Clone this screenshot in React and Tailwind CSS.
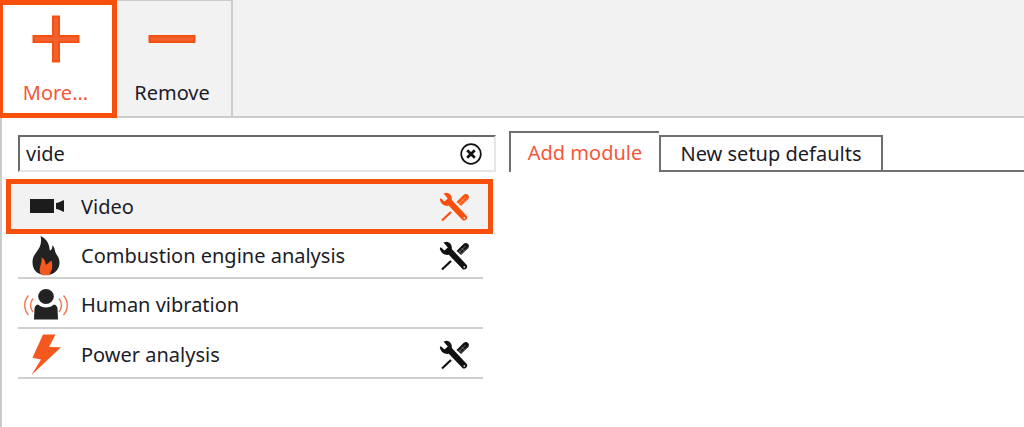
import { useState } from "react";

function PlusIcon() {
  return (
    <svg viewBox="0 0 48 48" className="h-12 w-12" aria-hidden="true">
      <path d="M20 0.5h8v19.5h19.5v8H28v19.5h-8V28H.5v-8H20z" fill="#f4500f" />
      <path d="M22 3h4v19h19v4H26v19h-4V26H3v-4h19z" fill="#f26030" />
    </svg>
  );
}

function MinusIcon() {
  return (
    <svg viewBox="0 0 48 48" className="h-12 w-12" aria-hidden="true">
      <path d="M.5 20h47v8H.5z" fill="#f4500f" />
      <path d="M3 22h42v4H3z" fill="#f26030" />
    </svg>
  );
}

function ClearIcon() {
  return (
    <svg viewBox="0 0 22 22" className="h-[22px] w-[22px]" fill="none" stroke="#111" aria-hidden="true">
      <circle cx="11" cy="11" r="9.8" strokeWidth="1.7" />
      <path d="M7.2 7.2l7.6 7.6M14.8 7.2l-7.6 7.6" strokeWidth="2.7" />
    </svg>
  );
}

function CameraIcon() {
  return (
    <svg viewBox="0 0 46 44" className="h-11 w-[46px]" aria-hidden="true">
      <path d="M7 14h24v14H7zM33 18l2.500-.6 5.500-2.400v12l-5.500-2.400-2.500-.6z" fill="#1c1c1c" />
    </svg>
  );
}

function FlameIcon() {
  return (
    <svg viewBox="0 0 46 44" className="h-11 w-[46px]" aria-hidden="true">
      <path
        d="M17.500 2c5 2.200 8.800 6.500 9.300 14.500 2.200-1 2.800-3 2.300-5.300 2.400 1.600 2.500 4.200 3.300 7 1.200 3 4.100 5.200 4.100 10.300 0 6.500-4.500 12-12 12.500h-3C14 40.500 9.500 35.500 9.500 28.500c0-4.500 1.600-7.300 4-10.500 3-4 5.800-8.500 4-16z"
        fill="#222"
      />
      <path
        d="M18.500 23.500c2.500.8 4 3.200 4.200 7.200 1.300-.4 2.600-1.200 3.500-2.400.8-.9 1.200-1.300 2.600-1.300.3 2.500.7 5 .2 8l-2.800 6.200h-6.400c-2.500-1-3.200-3.200-3.100-6 .4-3.800 2.400-6.700 1.800-11.700z"
        fill="#f4581e"
      />
    </svg>
  );
}

function VibrationIcon() {
  return (
    <svg viewBox="0 0 46 44" className="h-11 w-[46px]" aria-hidden="true">
      <ellipse cx="23" cy="13.500" rx="7.800" ry="7.500" fill="#222" />
      <path d="M15 21.500c2.200 2 5 3 8 3s5.800-1 8-3c2.200.5 3.300 2 3.500 4L35 36.500H11l.5-11c.2-2 1.300-3.500 3.500-4z" fill="#222" />
      <g fill="none" stroke="#f27a55" strokeWidth="1.500">
        <path d="M5.500 12.500c-5 5.500-5 14 0 19.500M10 15.500c-3.300 4-3.300 9.500 0 13.500" />
        <path d="M40.500 12.500c5 5.500 5 14 0 19.500M36 15.500c3.300 4 3.300 9.500 0 13.500" />
      </g>
    </svg>
  );
}

function BoltIcon() {
  return (
    <svg viewBox="0 0 46 44" className="h-11 w-[46px]" aria-hidden="true">
      <path d="M20 1.500h12.500L26 14l12 .3L8.500 42 18 26.500l-8.500-1.800z" fill="#f4581e" />
    </svg>
  );
}

function ToolsIcon() {
  return (
    <svg viewBox="0 0 32 30" className="h-[30px] w-8" aria-hidden="true">
      <path
        d="M5.500 1.500l3-.8c3.800.4 5.800 3.600 5.300 7.300L29 24.300c1 2.700-1.400 4.700-4 4.200L10.800 13.800C7 14.500 2.500 12.300 1.800 7l1-.7 3.700 3.200 3.300-3z"
        fill="currentColor"
      />
      <path d="M4 28.500l9-8.500" stroke="currentColor" strokeWidth="2.200" fill="none" />
      <path d="M18.500 10l7-7c1.800-1.400 3.500-1 4.600 0 1 1.100 1.200 2.600.1 4.200l-7 6.800z" fill="currentColor" />
      <path d="M21 9.500l3 3M23.500 7l3 3M20.500 12l7-7M23 13.500l7-7" stroke="#fff" strokeOpacity=".45" strokeWidth=".8" />
      <circle cx="26.300" cy="26" r=".9" fill="#fff" fillOpacity=".8" />
    </svg>
  );
}

const modules = [
  { name: "Video", Icon: CameraIcon, tools: true },
  { name: "Combustion engine analysis", Icon: FlameIcon, tools: true },
  { name: "Human vibration", Icon: VibrationIcon, tools: false },
  { name: "Power analysis", Icon: BoltIcon, tools: true },
];

function ModuleRow({ module, selected, onSelect }) {
  const { name, Icon, tools } = module;
  return (
    <li
      className={
        selected
          ? "flex h-[55px] items-center border-[5px] border-[#f8500c] bg-[#f2f2f2] pr-2 pl-3"
          : "mr-[10px] ml-3 flex h-[50px] items-center border-b-2 border-[#d0d0d0] pt-[3px] pr-[3px] pl-[5px] nth-2:h-[45px] nth-2:pt-0"
      }
    >
      <button type="button" onClick={onSelect} className="flex min-w-0 flex-1 items-center gap-3 text-left">
        <Icon />
        <span className="truncate">{name}</span>
      </button>
      {tools && (
        <button
          type="button"
          aria-label={name + " settings"}
          className={selected ? "mr-[10px] text-[#f8500c]" : "mr-[10px] text-[#111]"}
        >
          <ToolsIcon />
        </button>
      )}
    </li>
  );
}

export default function App() {
  const [query, setQuery] = useState("vide");
  const [selected, setSelected] = useState("Video");
  return (
    <div className="flex min-h-screen flex-col bg-white font-['Noto_Sans','DejaVu_Sans_Condensed',sans-serif] text-xl leading-6 text-[#1c1c28]">
      <header className="flex h-[118px] border-b-2 border-[#cccccc] bg-[#f2f2f2]">
        <button
          type="button"
          className="-mb-[2px] flex w-[117px] flex-col items-center border-[5px] border-l-[3px] border-[#f8500c] bg-white pt-[10px] pr-1 text-[#f4583a]"
        >
          <PlusIcon />
          <span className="mt-[18px]">More...</span>
        </button>
        <button
          type="button"
          className="flex w-[116px] flex-col items-center border-t border-r-2 border-[#cccccc] pt-[14px] pr-1"
        >
          <MinusIcon />
          <span className="mt-[18px]">Remove</span>
        </button>
      </header>
      <main className="flex flex-1 border-l-2 border-[#cccccc]">
        <section className="ml-1 w-[487px] shrink-0 pt-[17px]">
          <div className="-mr-[3px] ml-3 flex h-[37px] items-center border-2 border-t-[#6a6a6a] border-r-[#e6e6e6] border-b-[#e6e6e6] border-l-[#6a6a6a] pr-3 pl-[6px]">
            <input
              type="text"
              aria-label="Search modules"
              value={query}
              onChange={(e) => setQuery(e.target.value)}
              className="min-w-0 flex-1 bg-transparent outline-none"
            />
            <button type="button" aria-label="Clear search" onClick={() => setQuery("")}>
              <ClearIcon />
            </button>
          </div>
          <ul className="mt-[7px]">
            {modules.map((m) => (
              <ModuleRow key={m.name} module={m} selected={m.name === selected} onSelect={() => setSelected(m.name)} />
            ))}
          </ul>
        </section>
        <section className="min-w-0 flex-1 pt-[13px] pl-4">
          <div role="tablist" className="flex h-[41px] items-end">
            <button
              type="button"
              role="tab"
              aria-selected="true"
              className="h-[41px] w-[150px] border-t-2 border-l-2 border-[#707070] text-[#f4583a]"
            >
              Add module
            </button>
            <button
              type="button"
              role="tab"
              aria-selected="false"
              className="h-[37px] w-[224px] border-2 border-[#707070]"
            >
              New setup defaults
            </button>
            <div className="flex-1 border-b-2 border-[#707070]" />
          </div>
        </section>
      </main>
    </div>
  );
}
